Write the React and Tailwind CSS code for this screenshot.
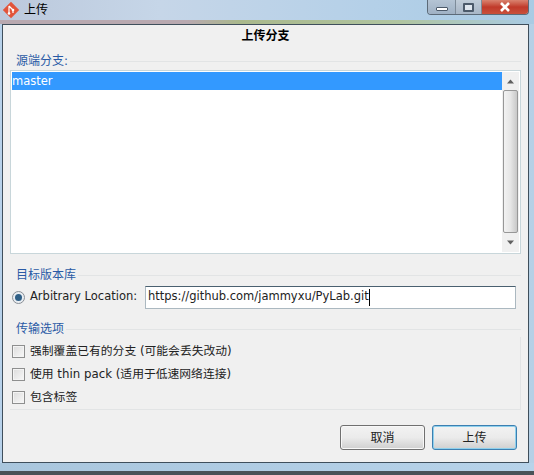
const FONT = "font-['DejaVu_Sans','Noto_Sans_CJK_SC',sans-serif]";

const OPTIONS = [
  "强制覆盖已有的分支 (可能会丢失改动)",
  "使用 thin pack (适用于低速网络连接)",
  "包含标签",
];

function WindowControls() {
  return (
    <div className="ml-auto mr-[5px] flex h-[15px] w-[102px] overflow-hidden rounded-b-[4px] border border-t-0 border-[#5c6a78]">
      <div className="flex w-[28px] items-end justify-center border-r border-[#7d8b99] bg-gradient-to-b from-[#b4c4d4] to-[#9fb1c4] pb-[3px]">
        <div className="h-[4px] w-[12px] rounded-[1px] border border-[#4c5a6a] bg-white" />
      </div>
      <div className="flex w-[26px] items-center justify-center border-r border-[#7d8b99] bg-gradient-to-b from-[#c0ccd8] to-[#a8b6c6]">
        <div className="h-[9px] w-[11px] rounded-[1px] border-2 border-[#4c5a6a] bg-[#dfe6ee]" />
      </div>
      <div className="flex flex-1 items-center justify-center bg-gradient-to-b from-[#d9826f] via-[#c0392a] to-[#c9503c]">
        <svg width="12" height="10" viewBox="0 0 12 10">
          <path d="M2 1l8 8M10 1l-8 8" stroke="#fff" strokeWidth="2.6" />
        </svg>
      </div>
    </div>
  );
}

function GroupLabel({ children }) {
  return (
    <div className="flex items-center">
      <span className="pr-[2px] text-[12px] leading-[16px] text-[#2a5aa5]">{children}</span>
      <div className="h-px flex-1 bg-[#e2e4e5]" />
    </div>
  );
}

function Check({ label }) {
  return (
    <div className="flex h-[23px] items-center">
      <div className="h-[13px] w-[13px] border border-[#8e8f8f] bg-gradient-to-br from-[#dcdcdc] to-[#f8f8f8] shadow-[inset_0_0_0_1px_#f4f4f4]" />
      <span className="ml-[5px] text-[11.8px] text-[#222]">{label}</span>
    </div>
  );
}

function DialogButton({ label, active }) {
  return (
    <div
      className={`flex h-[25px] w-[85px] items-center justify-center rounded-[3px] border bg-gradient-to-b from-[#f2f2f2] via-[#ebebeb] to-[#cfcfcf] text-[12px] text-[#222] ${
        active ? "border-[#3c7fb1] shadow-[inset_0_0_0_1px_#8fd0ec]" : "border-[#707070] shadow-[inset_0_0_0_1px_#f8f8f8]"
      }`}
    >
      {label}
    </div>
  );
}

function Arrow({ down }) {
  return (
    <svg width="9" height="5" viewBox="0 0 9 5">
      <path d={down ? "M1 0.5h7L4.5 4.5z" : "M4.5 0.5 8 4.5H1z"} fill="#606060" />
    </svg>
  );
}

export default function App() {
  return (
    <div className={`flex h-[475px] w-[534px] flex-col overflow-hidden bg-gradient-to-r from-[#b7d1ea] via-[#bcd5ec] to-[#b5d0e6] ${FONT}`}>
      <div className="flex h-[20px] shrink-0 items-start bg-[linear-gradient(90deg,#bcc9dc_0%,#c6d6e8_30%,#b4d0e8_70%,#a9cbe4_100%)]">
        <svg className="ml-[2px] mt-[1px]" width="18" height="18" viewBox="0 0 18 18">
          <path d="M9 .8 17.2 9 9 17.2.8 9z" fill="#e2543a" />
          <path d="M7 5l4 4M7 5v8M11 9v3" stroke="#fff" strokeWidth="1.2" fill="none" />
          <circle cx="7" cy="12.5" r="1.3" fill="#fff" />
          <circle cx="11" cy="9" r="1.3" fill="#fff" />
        </svg>
        <span className="ml-[4px] mt-[2px] text-[12px] leading-[16px] text-black">上传</span>
        <WindowControls />
      </div>
      <div className="h-[4px] shrink-0 bg-[linear-gradient(90deg,#b9a9b0_0%,#b9a9b0_35%,#a9b88c_45%,#b0c4a0_75%,#a9cbe4_100%)]" />

      <div className="ml-[2px] mr-[5px] flex h-[439px] shrink-0 flex-col border border-[#3f4f5c] bg-[#f0f0f0] px-[7px]">
        <div className="h-[22px] pt-[2px] text-center text-[12px] font-bold leading-[18px] text-black">上传分支</div>

        <div className="mt-[6px] pl-[6px]">
          <GroupLabel>源端分支:</GroupLabel>
        </div>
        <div className="mt-[1px] flex h-[184px] w-[511px] border border-[#c8d6da] bg-white p-px">
          <div className="flex-1">
            <div className="h-[18px] bg-[#3399ff] text-[11.5px] leading-[18px] text-white">master</div>
          </div>
          <div className="flex w-[17px] flex-col items-center bg-[#f0f0f0]">
            <div className="flex h-[18px] items-center justify-center">
              <Arrow />
            </div>
            <div className="h-[143px] w-[15px] rounded-[2px] border border-[#979797] bg-gradient-to-r from-[#f2f2f2] via-[#e6e6e6] to-[#c8c8c8]" />
            <div className="flex flex-1 items-center justify-center">
              <Arrow down />
            </div>
          </div>
        </div>

        <div className="mt-[13px] w-[511px] pl-[6px]">
          <GroupLabel>目标版本库</GroupLabel>
        </div>
        <div className="mt-[2px] flex h-[24px] w-[506px] items-center pl-[2px]">
          <div className="flex h-[13px] w-[13px] items-center justify-center rounded-full border border-[#8a8f96] bg-[#e8edf2]">
            <div className="h-[7px] w-[7px] rounded-full bg-[#2f5f86]" />
          </div>
          <span className="ml-[5px] text-[11.5px] text-[#222]">Arbitrary Location:</span>
          <div className="ml-auto flex h-[23px] w-[371px] items-center border border-[#abb8c0] border-t-[#4a6070] bg-white pl-[2px] text-[11.5px] text-[#222]">
            https://github.com/jammyxu/PyLab.git
            <div className="h-[17px] w-px bg-black" />
          </div>
        </div>

        <div className="mt-[12px] w-[511px] pl-[6px]">
          <GroupLabel>传输选项</GroupLabel>
        </div>
        <div className="w-[511px] border-b border-r border-[#e2e4e5] pl-[2px] pt-[3px]">
          {OPTIONS.map((o) => (
            <Check key={o} label={o} />
          ))}
        </div>

        <div className="mt-[15px] flex w-[507px] justify-end gap-[7px]">
          <DialogButton label="取消" />
          <DialogButton label="上传" active />
        </div>
      </div>

      <div className="h-[8px] shrink-0 bg-gradient-to-r from-[#a9c6dd] to-[#b7d3ea]" />
      <div className="flex-1 bg-[#4a5258]" />
    </div>
  );
}
